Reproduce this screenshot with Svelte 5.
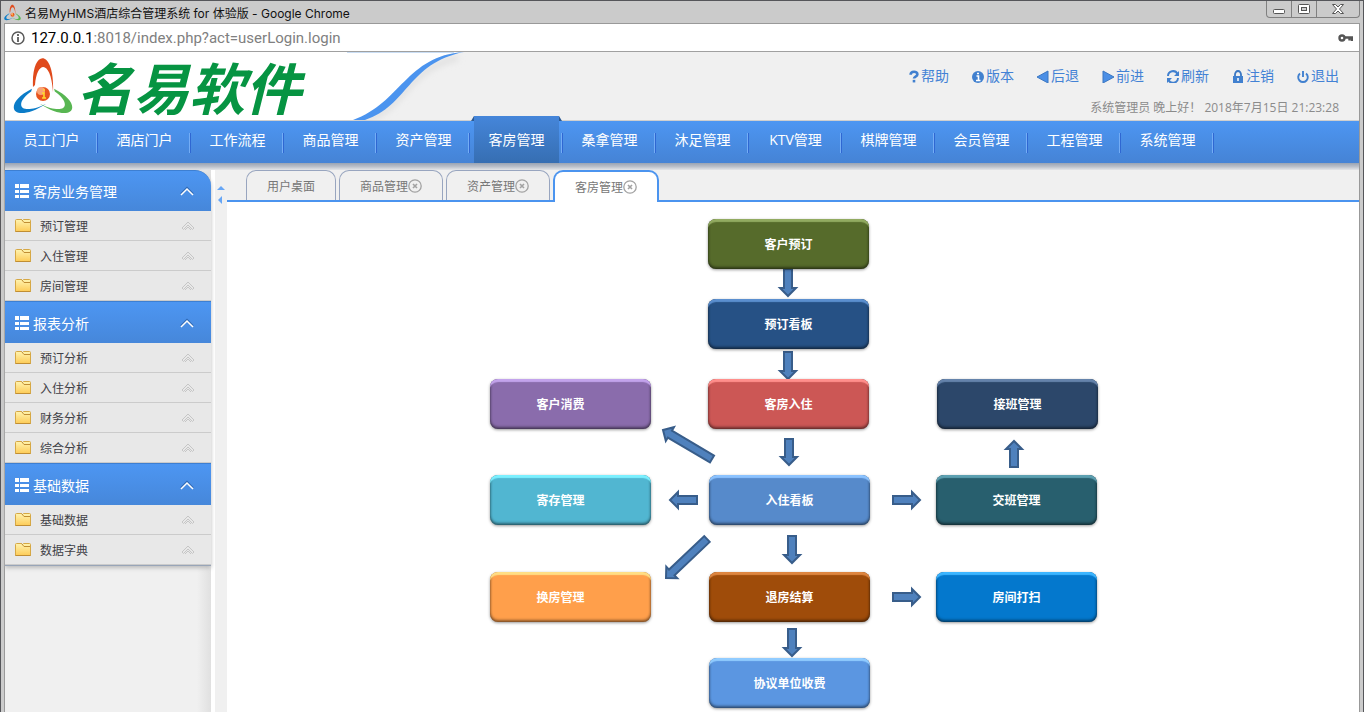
<script>
  const shortcuts = [
    { icon: "help", text: "帮助" },
    { icon: "info", text: "版本" },
    { icon: "back", text: "后退" },
    { icon: "forward", text: "前进" },
    { icon: "refresh", text: "刷新" },
    { icon: "lock", text: "注销" },
    { icon: "power", text: "退出" },
  ];

  const modules = [
    "员工门户", "酒店门户", "工作流程", "商品管理", "资产管理", "客房管理", "桑拿管理",
    "沐足管理", "KTV管理", "棋牌管理", "会员管理", "工程管理", "系统管理",
  ];
  let current = "客房管理";

  let groups = [
    { title: "客房业务管理", open: true, items: ["预订管理", "入住管理", "房间管理"] },
    { title: "报表分析", open: true, items: ["预订分析", "入住分析", "财务分析", "综合分析"] },
    { title: "基础数据", open: true, items: ["基础数据", "数据字典"] },
  ];

  let tabs = [
    { text: "用户桌面", fixed: true },
    { text: "商品管理" },
    { text: "资产管理" },
    { text: "客房管理" },
  ];
  let activeTab = "客房管理";

  // positions are relative to the flow chart canvas
  const nodes = [
    { text: "客户预订", x: 218, y: 0, color: "#566b2b", light: "#92ab61" },
    { text: "预订看板", x: 218, y: 80, color: "#265185", light: "#5b8fcf" },
    { text: "客户消费", x: 0, y: 160, color: "#8a6cac", light: "#c3a3ec", side: true },
    { text: "客房入住", x: 218, y: 160, color: "#cc5755", light: "#ff8f8c" },
    { text: "接班管理", x: 447, y: 160, color: "#2c476a", light: "#6583ab" },
    { text: "寄存管理", x: 0, y: 256, color: "#51b6d1", light: "#7cf0ff", side: true },
    { text: "入住看板", x: 219, y: 256, color: "#568acb", light: "#8cc3ff" },
    { text: "交班管理", x: 446, y: 256, color: "#285f6e", light: "#5da0b1" },
    { text: "换房管理", x: 0, y: 353, color: "#ff9f4b", light: "#ffdd84", side: true },
    { text: "退房结算", x: 219, y: 353, color: "#9f4c0a", light: "#dd8540" },
    { text: "房间打扫", x: 446, y: 353, color: "#0478cd", light: "#3cb5ff" },
    { text: "协议单位收费", x: 219, y: 439, color: "#5b96e1", light: "#91ccff" },
  ];

  // [tail x, tail y, tip x, tip y]
  const arrows = [
    [298, 50, 298, 77],
    [298, 133, 298, 160],
    [299, 220, 299, 246],
    [302, 317, 302, 344],
    [302, 410, 302, 437],
    [403, 281, 430, 281],
    [403, 378, 430, 378],
    [207, 281, 180, 281],
    [524, 248, 524, 222],
    [222, 240, 173, 211],
    [217, 320, 176, 359],
  ].map(([x1, y1, x2, y2]) => ({
    x: x1,
    y: y1,
    len: Math.hypot(x2 - x1, y2 - y1),
    angle: (Math.atan2(y2 - y1, x2 - x1) * 180) / Math.PI,
  }));

  function arrowPath(len) {
    const neck = len - 8;
    return `M0 -4H${neck}V-8L${len} 0L${neck} 8V4H0Z`;
  }

  function toggle(group) {
    group.open = !group.open;
    groups = groups;
  }

  function closeTab(tab) {
    tabs = tabs.filter((item) => item !== tab);
    if (activeTab === tab.text) activeTab = tabs[tabs.length - 1].text;
  }
</script>

{#snippet emblem(size)}
  <svg width={size} height={size} viewBox="0 0 60 60" aria-hidden="true">
    <g transform="translate(30 38)">
      <path fill="#e04a1c" d="M-10 -7C-12 -46 12 -46 10 -2C8 -34 -6 -34 -8 -9Z" />
      <path fill="#0b7cc8" transform="rotate(-120)" d="M10 -7C12 -42 -12 -42 -10 -2C-8 -31 6 -31 8 -9Z" />
      <path fill="#58b652" transform="rotate(120)" d="M-10 -7C-12 -42 12 -42 10 -2C8 -31 -6 -31 -8 -9Z" />
      <circle r="7" fill="#e8541e" />
      <circle cx="-2" cy="-3" r="4" fill="#f9a377" />
      <path d="M-1 -1H1V4M-1 4H3M0 -4H2" fill="none" stroke="#ffd92e" stroke-width="1.600" />
    </g>
  </svg>
{/snippet}

<div class="window">
  <div class="titlebar">
    {@render emblem(17)}
    <span class="titlebar__text">名易MyHMS酒店综合管理系统 for 体验版 - Google Chrome</span>
    <div class="winbuttons">
      <button aria-label="最小化">
        <svg width="14" height="12"><rect x="1.500" y="6.500" width="11" height="4" rx="1" fill="#fff" stroke="#555" /></svg>
      </button>
      <button aria-label="最大化">
        <svg width="14" height="12"><rect x="1.500" y="1.500" width="11" height="9" rx="1" fill="#fff" stroke="#555" /><rect x="4.500" y="4.500" width="5" height="3" fill="#ccc" stroke="#555" /></svg>
      </button>
      <button class="wide" aria-label="关闭">
        <svg width="14" height="12"><path d="M1.500 1.500H4.500L7 4L9.500 1.500H12.500L8.500 6L12.500 10.500H9.500L7 8L4.500 10.500H1.500L5.500 6Z" fill="#fff" stroke="#555" /></svg>
      </button>
    </div>
  </div>

  <div class="frame">
    <div class="address">
      <svg width="14" height="14" viewBox="0 0 14 14" fill="none" stroke="#5a5a5a">
        <circle cx="7" cy="7" r="6" stroke-width="1.500" />
        <path d="M7 6V11M7 3V5" stroke-width="1.800" />
      </svg>
      <span class="url"><b>127.0.0.1</b>:8018/index.php?act=userLogin.login</span>
      <svg width="15" height="10" viewBox="0 0 15 10" fill="none" stroke="#555">
        <circle cx="4" cy="5" r="2.500" stroke-width="2.400" />
        <path d="M7 4.500H14V8M11.500 4V7.500" stroke-width="2.400" />
      </svg>
    </div>

    <header>
      <div class="logo">
        {@render emblem(60)}
        <h1>名易软件</h1>
      </div>
      <svg width="140" height="68" viewBox="0 0 140 68">
        <defs>
          <filter id="soft" x="-20%" y="-20%" width="150%" height="150%"><feGaussianBlur stdDeviation="3" /></filter>
        </defs>
        <path d="M26 68C64 58 66 16 118 6" fill="none" stroke="#dedede" stroke-width="5" filter="url(#soft)" />
        <path d="M0 0H120C68 5 66 54 14 68H0Z" fill="#fff" />
        <path d="M124 0C66 4 61 51 13 68H25C68 54 68 11 124 0Z" fill="#4b94ef" />
        <path d="M7 0.500H114" stroke="#c9ddf4" />
      </svg>
      <div class="header__right">
        <div class="shortcuts">
          {#each shortcuts as item}
            <a href="#{item.icon}">
              <svg height="14" viewBox="0 0 14 14" width={item.icon === "help" ? 12 : 14} aria-hidden="true">
                {#if item.icon === "help"}
                  <path d="M3 5.500C3 1 11 1 11 5C11 8 7 7.500 7 10" fill="none" stroke="#4180cf" stroke-width="3" />
                  <rect x="5.500" y="11.500" width="3" height="3" fill="#4180cf" />
                {:else if item.icon === "info"}
                  <circle cx="7" cy="8" r="6" fill="#4180cf" />
                  <path d="M5.500 7H7.500V11.500M5 11.500H9.500M6 4.500H8" fill="none" stroke="#fff" stroke-width="1.600" />
                {:else if item.icon === "back"}
                  <path d="M12 2V14L1 8Z" fill="#4b8fe6" stroke="#3b77c2" />
                {:else if item.icon === "forward"}
                  <path d="M2 2V14L13 8Z" fill="#4b8fe6" stroke="#3b77c2" />
                {:else if item.icon === "refresh"}
                  <path d="M2 7A5 5 0 0 1 11.500 5M12 9A5 5 0 0 1 2.500 11" fill="none" stroke="#4180cf" stroke-width="2" />
                  <path d="M13 2V7H8ZM1 14V9H6Z" fill="#4180cf" />
                {:else if item.icon === "lock"}
                  <path d="M4 8V5.500A3 3.500 0 0 1 10 5.500V8" fill="none" stroke="#3b77c2" stroke-width="1.800" />
                  <rect x="2" y="7" width="10" height="7" fill="#4180cf" />
                  <path d="M7 9V12" stroke="#fff" stroke-width="1.500" />
                {:else}
                  <path d="M4 4.500A4.800 4.800 0 1 0 10 4.500M7 2V8" fill="none" stroke="#4180cf" stroke-width="1.900" />
                {/if}
              </svg>{item.text}
            </a>
          {/each}
        </div>
        <p>系统管理员 晚上好！ 2018年7月15日 21:23:28</p>
      </div>
    </header>

    <nav>
      {#each modules as name}
        <a href="#{name}" class:active={name === current} on:click={() => (current = name)}><span>{name}</span></a>
      {/each}
    </nav>
    <div class="nav__shadow"></div>

    <div class="body">
      <aside>
        <div class="menu">
          {#each groups as group}
            <button class="menu__title" on:click={() => toggle(group)}>
              <svg width="14" height="14" fill="#fff"><path d="M0 0H4V4H0ZM5 0H14V4H5ZM0 6H4V9H0ZM5 6H14V9H5ZM0 11H4V14H0ZM5 11H14V14H5Z" /></svg>
              <span>{group.title}</span>
              <svg width="16" height="10" fill="none"><path d="M2 8L8 2L14 8" stroke="#2f69b5" stroke-width="2" /><path d="M2 9L8 3L14 9" stroke="#fff" stroke-width="1.500" /></svg>
            </button>
            {#if group.open}
              <ul>
                {#each group.items as item}
                  <li>
                    <a href="#{item}">
                      <svg width="16" height="13" viewBox="0 0 16 13">
                        <defs><linearGradient id="folder" x2="0" y2="1"><stop stop-color="#fff4b0" /><stop offset="1" stop-color="#fdcb57" /></linearGradient></defs>
                        <path d="M0.500 1.500Q0.500 0.500 1.500 0.500H6.500L7.500 1.500L8.500 0.500H14.500Q15.500 0.500 15.500 1.500V12.500H0.500Z" fill="url(#folder)" stroke="#d6a845" />
                        <path d="M6.500 0.500L9 3.500H15M0.500 12.500H15.500" fill="none" stroke="#c08e34" />
                      </svg>
                      <span>{item}</span>
                      <svg width="14" height="10" fill="none"><path d="M1 7L7 1L13 7L11.500 8.500L7 4L2.500 8.500ZM4 9L7 6L10 9" stroke="#c6c6c6" /></svg>
                    </a>
                  </li>
                {/each}
              </ul>
            {/if}
          {/each}
        </div>
      </aside>

      <div class="splitter">
        <svg width="8" height="20" fill="#67a6f5"><path d="M0 4L4 0L8 4ZM5 10V18L1 14Z" /></svg>
      </div>

      <main>
        <div class="tabs">
          {#each tabs as tab}
            <div class="tab" class:active={tab.text === activeTab}>
              <button on:click={() => (activeTab = tab.text)}>{tab.text}</button>
              {#if !tab.fixed}
                <button class="tab__close" aria-label="关闭{tab.text}" on:click={() => closeTab(tab)}>
                  <svg width="14" height="14" fill="none" stroke="#a2a2a2"><circle cx="7" cy="7" r="6.200" stroke-width="1.300" /><path d="M5 5L9 9M9 5L5 9" stroke-width="1.600" /></svg>
                </button>
              {/if}
            </div>
          {/each}
        </div>

        <div class="flow">
          <svg class="flow__arrows" width="606" height="490">
            {#each arrows as a}
              <path d={arrowPath(a.len)} transform="translate({a.x} {a.y}) rotate({a.angle})" />
            {/each}
          </svg>
          {#each nodes as node}
            <a
              class="node"
              class:side={node.side}
              href="#{node.text}"
              style="left: {node.x}px; top: {node.y}px; --color: {node.color}; --light: {node.light}"
            >{node.text}</a>
          {/each}
        </div>
      </main>
    </div>
  </div>
</div>

<style>
  :global(body) {
    margin: 0;
    font-family: "Open Sans", "Noto Sans CJK SC", sans-serif;
    font-size: 12px;
  }
  * {
    box-sizing: border-box;
  }
  a {
    text-decoration: none;
    color: inherit;
  }
  button {
    border: 0;
    padding: 0;
    background: none;
    font: inherit;
    color: inherit;
    cursor: pointer;
  }
  svg {
    flex-shrink: 0;
  }
  ul {
    list-style: none;
    margin: 0;
    padding: 0;
  }

/* window */
  .window {
    display: flex;
    flex-direction: column;
    min-height: 100vh;
    background: #cbcbcb;
    border: 1px solid #55565a;
    border-bottom: 0;
    padding: 0 3px;
  }
  .titlebar {
    display: flex;
    align-items: center;
    height: 22px;
    gap: 4px;
    color: #111;
  }
  .titlebar__text {
    flex: 1;
    font-family: Inter, "Noto Sans CJK SC", sans-serif;
    white-space: nowrap;
  }
  .winbuttons {
    display: flex;
    align-self: flex-start;
    border: 1px solid #808080;
    border-top: 0;
    border-radius: 0 0 4px 4px;
  }
  .winbuttons button {
    display: flex;
    align-items: center;
    justify-content: center;
    width: 25px;
    height: 16px;
    border-right: 1px solid #808080;
  }
  .winbuttons .wide {
    width: 42px;
    border-right: 0;
  }
  .frame {
    display: flex;
    flex-direction: column;
    flex: 1;
    border: 1px solid #999;
    border-bottom: 0;
    background: #f0f0f0;
  }
  .address {
    display: flex;
    align-items: center;
    gap: 6px;
    height: 28px;
    padding: 0 6px;
    background: #fff;
    border-bottom: 1px solid #a0a0a0;
    color: #808080;
    font-family: Roboto, sans-serif;
    font-size: 15px;
  }
  .url {
    flex: 1;
  }
  .url b {
    font-weight: normal;
    color: #000;
  }

/* header */
  header {
    display: flex;
    height: 69px;
    border-bottom: 1px solid #cfcfcf;
  }
  .logo {
    display: flex;
    align-items: center;
    gap: 4px;
    width: 335px;
    padding-left: 8px;
    background: #fff;
  }
  .logo h1 {
    margin: 0;
    color: #069442;
    font-family: "Noto Sans CJK SC", sans-serif;
    font-size: 56px;
    font-style: italic;
    line-height: 68px;
    white-space: nowrap;
  }
  .header__right {
    flex: 1;
    display: flex;
    flex-direction: column;
    align-items: flex-end;
    gap: 12px;
    padding: 14px 20px 0 0;
  }
  .header__right p {
    margin: 0;
    color: #8b8b8b;
    line-height: 20px;
  }
  .shortcuts {
    display: flex;
    gap: 22px;
    color: #4382d5;
    font-size: 14px;
    line-height: 20px;
  }
  .shortcuts a {
    display: flex;
    align-items: center;
    gap: 1px;
    white-space: nowrap;
  }

/* main menu */
  nav {
    display: flex;
    height: 42px;
    background: linear-gradient(#4d96f2, #4583d5);
    color: #fff;
    font-size: 14px;
    line-height: 38px;
    text-align: center;
  }
  nav a {
    position: relative;
    width: 93px;
    height: 42px;
  }
  nav a::after {
    content: "";
    position: absolute;
    right: 0;
    top: 12px;
    width: 2px;
    height: 20px;
    background: linear-gradient(90deg, #74adf5 50%, #2f67d2 50%);
  }
  nav a.active span {
    position: absolute;
    left: 4px;
    right: 4px;
    top: -5px;
    bottom: 0;
    padding-top: 5px;
    background: linear-gradient(#4586da, #366eb2);
  }
  nav a.active::before {
    content: "";
    position: absolute;
    left: 1px;
    right: 1px;
    top: -5px;
    border: 3px solid transparent;
    border-top: 0;
    border-bottom: 5px solid #2b5a94;
  }
  .nav__shadow {
    height: 7px;
    background: linear-gradient(#98a3b3, #b9bfc9 50%, #e4e6e9);
  }

/* side menu */
  .body {
    display: flex;
    flex: 1;
  }
  aside {
    width: 210px;
    background: linear-gradient(90deg, #f0f0f0 192px, #e0e0e0 206px, #fff 206px);
  }
  .menu {
    width: 206px;
    border-bottom: 1px solid #98a5b8;
    box-shadow: 0 2px 4px #bbb;
    border-radius: 0 16px 0 0;
    background: #e8e8e8;
  }
  .menu__title {
    display: flex;
    align-items: center;
    gap: 4px;
    width: 100%;
    height: 42px;
    padding: 0 16px 0 10px;
    border-top: 1px solid #3d7fd2;
    background: linear-gradient(#4d96f2, #4687da);
    color: #fff;
    font-size: 14px;
    text-align: left;
  }
  .menu__title:first-child {
    height: 41px;
    border-radius: 0 16px 0 0;
  }
  .menu span {
    flex: 1;
  }
  li {
    height: 30px;
    border-bottom: 1px solid #cbcbcb;
  }
  li a {
    display: flex;
    align-items: center;
    gap: 9px;
    height: 29px;
    padding: 0 16px 0 10px;
    color: #3f3f46;
  }
  .splitter {
    width: 12px;
    padding: 16px 2px;
  }

/* tabs */
  main {
    flex: 1;
    background: #fff;
  }
  .tabs {
    display: flex;
    gap: 3px;
    height: 32px;
    padding-left: 19px;
    border-bottom: 2px solid #4b94ef;
    background: #f0f0f0;
    color: #777;
  }
  .tab {
    display: flex;
    align-items: center;
    height: 30px;
    padding: 0 20px;
    border: 1px solid #98a5bf;
    border-bottom: 0;
    border-radius: 10px 10px 0 0;
  }
  .tab.active {
    height: 32px;
    border: 2px solid #4b94ef;
    border-bottom: 0;
    background: #fff;
  }
  .tab__close {
    display: flex;
  }

/* flow chart */
  .flow {
    position: relative;
    width: 606px;
    height: 490px;
    margin: 17px auto 0;
  }
  .flow__arrows {
    position: absolute;
    left: 0;
    top: 0;
    overflow: visible;
    fill: #4f81bd;
    stroke: #385d8a;
    stroke-width: 2;
  }
  .node {
    position: absolute;
    display: flex;
    align-items: center;
    justify-content: center;
    width: 161px;
    height: 50px;
    border-radius: 8px;
    background: var(--color);
    box-shadow: inset 0 4px 1px -1px var(--light), inset 0 -2px 3px rgba(0, 0, 0, 0.4),
      inset 0 0 3px rgba(0, 0, 0, 0.4), 0 1px 3px rgba(0, 0, 0, 0.4);
    color: #fff;
    font-weight: bold;
  }
  .node.side {
    padding-right: 20px;
  }
</style>
